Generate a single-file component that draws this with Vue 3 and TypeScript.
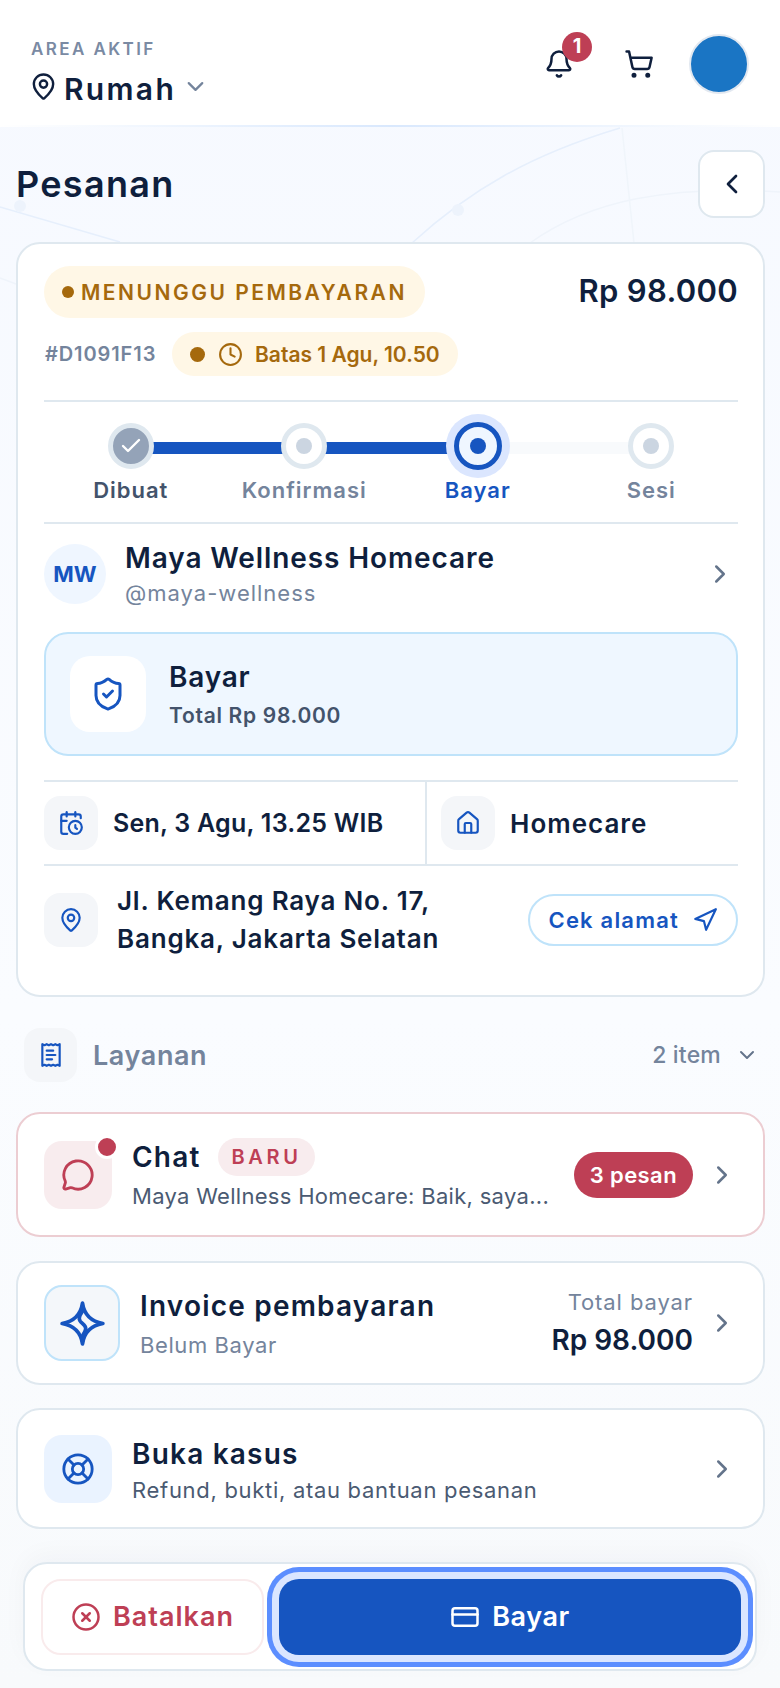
<template>
  <div class="page">
    <svg class="map-lines" viewBox="0 0 780 1100" fill="none" aria-hidden="true">
      <path d="M0 207 L120 242" stroke="#e6effc" stroke-width="1.5" />
      <path d="M412 243 C 470 190, 530 155, 620 128" stroke="#e6effc" stroke-width="1.5" />
      <path d="M530 243 C 590 200, 670 185, 780 192" stroke="#eff4fb" stroke-width="1.5" />
      <path d="M622 128 L 634 243" stroke="#f0f5fb" stroke-width="1.5" />
      <path d="M0 278 L 16 284" stroke="#eff4fb" stroke-width="1.5" />
      <circle cx="458" cy="210" r="6" fill="#edf3fc" />
      <circle cx="20" cy="206" r="6" fill="#edf3fc" />
    </svg>

    <header class="topbar">
      <div class="area">
        <span class="area-label">AREA AKTIF</span>
        <div class="area-name">
          <svg class="pin" viewBox="0 0 24 24" fill="none" stroke="currentColor" stroke-width="2" stroke-linecap="round" stroke-linejoin="round">
            <path d="M20 10c0 4.993-5.539 10.193-7.399 11.799a1 1 0 0 1-1.202 0C9.539 20.193 4 14.993 4 10a8 8 0 0 1 16 0" />
            <circle cx="12" cy="10" r="3" />
          </svg>
          <span>Rumah</span>
          <svg class="area-chevron" viewBox="0 0 24 24" fill="none" stroke="currentColor" stroke-width="2" stroke-linecap="round" stroke-linejoin="round">
            <path d="m6 9 6 6 6-6" />
          </svg>
        </div>
      </div>
      <div class="top-actions">
        <div class="bell">
          <svg viewBox="0 0 24 24" fill="none" stroke="currentColor" stroke-width="2" stroke-linecap="round" stroke-linejoin="round">
            <path d="M10.268 21a2 2 0 0 0 3.464 0" />
            <path d="M3.262 15.326A1 1 0 0 0 4 17h16a1 1 0 0 0 .74-1.673C19.41 13.956 18 12.499 18 8A6 6 0 0 0 6 8c0 4.499-1.411 5.956-2.738 7.326" />
          </svg>
          <span class="bell-badge">1</span>
        </div>
        <svg class="cart" viewBox="0 0 24 24" fill="none" stroke="currentColor" stroke-width="2" stroke-linecap="round" stroke-linejoin="round">
          <circle cx="8" cy="21" r="1" />
          <circle cx="19" cy="21" r="1" />
          <path d="M2.05 2.05h2l2.66 12.42a2 2 0 0 0 2 1.58h9.78a2 2 0 0 0 1.95-1.57l1.65-7.43H5.12" />
        </svg>
        <div class="avatar"></div>
      </div>
    </header>

    <main class="content">
      <div class="title-row">
        <h1>Pesanan</h1>
        <button type="button" class="back">
          <svg viewBox="0 0 24 24" fill="none" stroke="currentColor" stroke-width="2" stroke-linecap="round" stroke-linejoin="round">
            <path d="m15 18-6-6 6-6" />
          </svg>
        </button>
      </div>

      <section class="card order">
        <div class="order-top">
          <span class="status"><i class="dot"></i>MENUNGGU PEMBAYARAN</span>
          <strong class="price">Rp 98.000</strong>
        </div>
        <div class="order-meta">
          <span class="code">#D1091F13</span>
          <span class="deadline">
            <i class="dot big"></i>
            <svg viewBox="0 0 24 24" fill="none" stroke="currentColor" stroke-width="2" stroke-linecap="round" stroke-linejoin="round">
              <circle cx="12" cy="12" r="10" />
              <polyline points="12 6 12 12 16 14" />
            </svg>
            Batas 1 Agu, 10.50
          </span>
        </div>

        <div class="stepper">
          <div v-for="(step, index) in steps" :key="step.label" class="step" :class="step.state">
            <span v-if="index < steps.length - 1" class="bar" :class="{ on: step.barOn }"></span>
            <span class="node">
              <svg v-if="step.state === 'done'" viewBox="0 0 24 24" fill="none" stroke="#fff" stroke-width="2.4" stroke-linecap="round" stroke-linejoin="round">
                <path d="M20 6 9 17l-5-5" />
              </svg>
              <i v-else></i>
            </span>
            <span class="step-label">{{ step.label }}</span>
          </div>
        </div>

        <div class="provider">
          <span class="initials">MW</span>
          <div class="provider-text">
            <strong>Maya Wellness Homecare</strong>
            <span>@maya-wellness</span>
          </div>
          <svg class="chev" viewBox="0 0 24 24" fill="none" stroke="currentColor" stroke-width="2" stroke-linecap="round" stroke-linejoin="round">
            <path d="m9 18 6-6-6-6" />
          </svg>
        </div>

        <div class="pay-box">
          <span class="pay-icon">
            <svg viewBox="0 0 24 24" fill="none" stroke="currentColor" stroke-width="2" stroke-linecap="round" stroke-linejoin="round">
              <path d="M20 13c0 5-3.5 7.5-7.66 8.95a1 1 0 0 1-.67-.01C7.5 20.5 4 18 4 13V6a1 1 0 0 1 1-1c2 0 4.5-1.2 6.24-2.72a1.17 1.17 0 0 1 1.52 0C14.51 3.81 17 5 19 5a1 1 0 0 1 1 1z" />
              <path d="m9 12 2 2 4-4" />
            </svg>
          </span>
          <div>
            <strong>Bayar</strong>
            <span>Total Rp 98.000</span>
          </div>
        </div>

        <div class="facts">
          <div class="fact left">
            <span class="fact-icon">
              <svg viewBox="0 0 24 24" fill="none" stroke="currentColor" stroke-width="2" stroke-linecap="round" stroke-linejoin="round">
                <path d="M21 7.5V6a2 2 0 0 0-2-2H5a2 2 0 0 0-2 2v14a2 2 0 0 0 2 2h3.5" />
                <path d="M16 2v4" />
                <path d="M8 2v4" />
                <path d="M3 10h5" />
                <path d="M17.5 17.5 16 16.3V14" />
                <circle cx="16" cy="16" r="6" />
              </svg>
            </span>
            <span>Sen, 3 Agu, 13.25 WIB</span>
          </div>
          <div class="fact right">
            <span class="fact-icon">
              <svg viewBox="0 0 24 24" fill="none" stroke="currentColor" stroke-width="2" stroke-linecap="round" stroke-linejoin="round">
                <path d="M15 21v-8a1 1 0 0 0-1-1h-4a1 1 0 0 0-1 1v8" />
                <path d="M3 10a2 2 0 0 1 .709-1.528l7-5.999a2 2 0 0 1 2.582 0l7 5.999A2 2 0 0 1 21 10v9a2 2 0 0 1-2 2H5a2 2 0 0 1-2-2z" />
              </svg>
            </span>
            <span>Homecare</span>
          </div>
        </div>

        <div class="address">
          <span class="fact-icon">
            <svg viewBox="0 0 24 24" fill="none" stroke="currentColor" stroke-width="2" stroke-linecap="round" stroke-linejoin="round">
              <path d="M20 10c0 4.993-5.539 10.193-7.399 11.799a1 1 0 0 1-1.202 0C9.539 20.193 4 14.993 4 10a8 8 0 0 1 16 0" />
              <circle cx="12" cy="10" r="3" />
            </svg>
          </span>
          <p>Jl. Kemang Raya No. 17,<br />Bangka, Jakarta Selatan</p>
          <button type="button" class="check">
            Cek alamat
            <svg viewBox="0 0 24 24" fill="none" stroke="currentColor" stroke-width="2" stroke-linecap="round" stroke-linejoin="round">
              <polygon points="3 11 22 2 13 21 11 13 3 11" />
            </svg>
          </button>
        </div>
      </section>

      <div class="section-row">
        <span class="fact-icon small">
          <svg viewBox="0 0 24 24" fill="none" stroke="currentColor" stroke-width="2" stroke-linecap="round" stroke-linejoin="round">
            <path d="M4 2v20l2-1 2 1 2-1 2 1 2-1 2 1 2-1 2 1V2l-2 1-2-1-2 1-2-1-2 1-2-1-2 1Z" />
            <path d="M14 8H8" />
            <path d="M16 12H8" />
            <path d="M13 16H8" />
          </svg>
        </span>
        <span class="section-title">Layanan</span>
        <span class="section-count">2 item</span>
        <svg class="section-chevron" viewBox="0 0 24 24" fill="none" stroke="currentColor" stroke-width="2" stroke-linecap="round" stroke-linejoin="round">
          <path d="m6 9 6 6 6-6" />
        </svg>
      </div>

      <section class="card row chat">
        <span class="row-icon rose">
          <svg viewBox="0 0 24 24" fill="none" stroke="currentColor" stroke-width="2" stroke-linecap="round" stroke-linejoin="round">
            <path d="M2.992 16.342a2 2 0 0 1 .094 1.167l-1.065 3.29a1 1 0 0 0 1.236 1.168l3.413-.998a2 2 0 0 1 1.099.092 10 10 0 1 0-4.777-4.719" />
          </svg>
          <i class="unread"></i>
        </span>
        <div class="row-text">
          <div class="row-title">
            <strong>Chat</strong>
            <span class="new-tag">BARU</span>
          </div>
          <span class="row-sub">Maya Wellness Homecare: Baik, saya...</span>
        </div>
        <span class="count-pill">3 pesan</span>
        <svg class="chev" viewBox="0 0 24 24" fill="none" stroke="currentColor" stroke-width="2" stroke-linecap="round" stroke-linejoin="round">
          <path d="m9 18 6-6-6-6" />
        </svg>
      </section>

      <section class="card row invoice">
        <span class="row-icon outlined">
          <svg viewBox="0 0 24 24" fill="none" stroke="currentColor" stroke-width="1.8" stroke-linecap="round" stroke-linejoin="round">
            <path d="M12 2C12.8 7.5 16 11 22 12C16 13 12.8 16.5 12 22C11.2 16.5 8 13 2 12C8 11 11.2 7.5 12 2Z" />
            <path d="M12 6C10.2 8.6 9.6 10.2 12 12C14.4 13.8 13.8 15.4 12 18" />
          </svg>
        </span>
        <div class="row-text">
          <div class="row-title"><strong>Invoice pembayaran</strong></div>
          <span class="row-sub muted">Belum Bayar</span>
        </div>
        <div class="total">
          <span>Total bayar</span>
          <strong>Rp 98.000</strong>
        </div>
        <svg class="chev" viewBox="0 0 24 24" fill="none" stroke="currentColor" stroke-width="2" stroke-linecap="round" stroke-linejoin="round">
          <path d="m9 18 6-6-6-6" />
        </svg>
      </section>

      <section class="card row case">
        <span class="row-icon sky">
          <svg viewBox="0 0 24 24" fill="none" stroke="currentColor" stroke-width="2" stroke-linecap="round" stroke-linejoin="round">
            <circle cx="12" cy="12" r="10" />
            <path d="m4.93 4.93 4.24 4.24" />
            <path d="m14.83 9.17 4.24-4.24" />
            <path d="m14.83 14.83 4.24 4.24" />
            <path d="m9.17 14.83-4.24 4.24" />
            <circle cx="12" cy="12" r="4" />
          </svg>
        </span>
        <div class="row-text">
          <div class="row-title"><strong>Buka kasus</strong></div>
          <span class="row-sub wide">Refund, bukti, atau bantuan pesanan</span>
        </div>
        <svg class="chev" viewBox="0 0 24 24" fill="none" stroke="currentColor" stroke-width="2" stroke-linecap="round" stroke-linejoin="round">
          <path d="m9 18 6-6-6-6" />
        </svg>
      </section>

      <div class="action-bar">
        <button type="button" class="cancel">
          <svg viewBox="0 0 24 24" fill="none" stroke="currentColor" stroke-width="2" stroke-linecap="round" stroke-linejoin="round">
            <circle cx="12" cy="12" r="10" />
            <path d="m15 9-6 6" />
            <path d="m9 9 6 6" />
          </svg>
          Batalkan
        </button>
        <button type="button" class="pay">
          <svg viewBox="0 0 24 24" fill="none" stroke="currentColor" stroke-width="2" stroke-linecap="round" stroke-linejoin="round">
            <rect width="20" height="14" x="2" y="5" rx="2" />
            <line x1="2" x2="22" y1="10" y2="10" />
          </svg>
          Bayar
        </button>
      </div>
    </main>
  </div>
</template>

<script setup lang="ts">
interface Step {
  label: string
  state: 'done' | 'todo' | 'active'
  barOn: boolean
}

const steps: Step[] = [
  { label: 'Dibuat', state: 'done', barOn: true },
  { label: 'Konfirmasi', state: 'todo', barOn: true },
  { label: 'Bayar', state: 'active', barOn: false },
  { label: 'Sesi', state: 'todo', barOn: false },
]
</script>

<style>
body {
  background: #f8fafc;
}
</style>

<style scoped>
.page {
  position: relative;
  width: 780px;
  height: 1688px;
  overflow: hidden;
  background: linear-gradient(180deg, #f6f9ff 0%, #fafcff 60%, #f8fafc 100%);
  font-family: Inter, 'Noto Sans', sans-serif;
  color: #0f1f3d;
}

.map-lines {
  position: absolute;
  top: 0;
  left: 0;
  width: 780px;
  height: 1100px;
}

.topbar {
  position: relative;
  display: flex;
  justify-content: space-between;
  align-items: flex-start;
  height: 127px;
  padding: 0 31px;
  box-sizing: border-box;
  background: #fff;
  border-bottom: 2px solid;
  border-image: linear-gradient(90deg, #fff 0%, #d9e8fd 50%, #fff 100%) 1;
}

.area {
  display: flex;
  flex-direction: column;
  padding-top: 39px;
}

.area-label {
  font-size: 17px;
  line-height: 20px;
  font-weight: 600;
  letter-spacing: 2.4px;
  color: #7a8aa3;
}

.area-name {
  display: flex;
  align-items: center;
  margin-top: 10px;
  font-size: 30px;
  line-height: 40px;
  font-weight: 600;
  letter-spacing: 2.3px;
}

.pin {
  width: 29px;
  height: 29px;
  margin: -6px 6px 0 -2px;
}

.area-chevron {
  width: 27px;
  height: 27px;
  margin: -6px 0 0 6px;
  color: #74849c;
}

.top-actions {
  display: flex;
  align-items: center;
  padding-top: 34px;
}

.bell {
  position: relative;
  width: 30px;
  height: 30px;
}

.bell svg {
  display: block;
  width: 30px;
  height: 30px;
}

.bell-badge {
  position: absolute;
  top: -17px;
  left: 18px;
  width: 30px;
  height: 30px;
  border-radius: 50%;
  background: #be3f55;
  color: #fff;
  font-size: 20px;
  line-height: 28px;
  font-weight: 700;
  text-align: center;
}

.cart {
  width: 30px;
  height: 30px;
  margin-left: 50px;
}

.avatar {
  width: 60px;
  height: 60px;
  margin-left: 35px;
  box-sizing: border-box;
  border-radius: 50%;
  border: 2px solid #e2e8f0;
  background: #1a75c4;
}

.content {
  position: relative;
  display: flex;
  flex-direction: column;
  padding: 0 15px 0 16px;
}

.title-row {
  display: flex;
  justify-content: space-between;
  align-items: center;
  height: 68px;
  margin-top: 23px;
}

h1 {
  margin: -1px 0 0;
  font-size: 36px;
  font-weight: 600;
  letter-spacing: 1.3px;
  line-height: 42px;
}

.back {
  display: flex;
  align-items: center;
  justify-content: center;
  width: 67px;
  height: 68px;
  padding: 0;
  box-sizing: border-box;
  border-radius: 16px;
  border: 2px solid #dfe8ef;
  background: #fff;
  color: #0f1f3d;
}

.back svg {
  width: 32px;
  height: 32px;
}

.card {
  box-sizing: border-box;
  border-radius: 24px;
  border: 2px solid #dfe8ef;
  background: #fff;
}

.order {
  height: 755px;
  margin-top: 24px;
  padding: 22px 25px 0 26px;
}

.order-top {
  display: flex;
  justify-content: space-between;
  align-items: flex-start;
}

.status {
  display: inline-flex;
  align-items: center;
  height: 52px;
  padding: 0 18px;
  border-radius: 26px;
  background: #fff7e6;
  color: #a5690d;
  font-size: 21px;
  font-weight: 600;
  letter-spacing: 2.5px;
  white-space: nowrap;
}

.dot {
  display: inline-block;
  width: 12px;
  height: 12px;
  margin-right: 7px;
  border-radius: 50%;
  background: #a5690d;
}

.dot.big {
  width: 15px;
  height: 15px;
  margin-right: 13px;
}

.price {
  margin: 2px 0 0;
  font-size: 31px;
  line-height: 46px;
  font-weight: 600;
  letter-spacing: 0.3px;
}

.order-meta {
  display: flex;
  align-items: center;
  gap: 15px;
  margin-top: 14px;
}

.code {
  width: 113px;
  padding-left: 1px;
  box-sizing: border-box;
  font-size: 20px;
  font-weight: 600;
  letter-spacing: 0.9px;
  color: #74849c;
  white-space: nowrap;
}

.deadline {
  display: inline-flex;
  align-items: center;
  height: 44px;
  padding: 0 18px 0 18px;
  border-radius: 22px;
  background: #fff7e6;
  color: #a5690d;
  font-size: 21px;
  font-weight: 600;
  white-space: nowrap;
}

.deadline svg {
  width: 25px;
  height: 25px;
  margin-right: 12px;
}

.stepper {
  display: grid;
  grid-template-columns: repeat(4, 1fr);
  height: 124px;
  margin-top: 24px;
  padding-top: 13px;
  box-sizing: border-box;
  border-top: 2px solid #dfe8ef;
  border-bottom: 2px solid #dfe8ef;
}

.step {
  position: relative;
  display: flex;
  flex-direction: column;
  align-items: center;
}

.bar {
  position: absolute;
  top: 27px;
  left: 50%;
  width: 100%;
  height: 12px;
  background: #f8fafc;
}

.bar.on {
  background: #1655c0;
}

.node {
  position: relative;
  display: flex;
  align-items: center;
  justify-content: center;
  box-sizing: border-box;
  width: 46px;
  height: 46px;
  margin-top: 8px;
  border-radius: 50%;
  border: 5px solid #dfe8ef;
  background: #fff;
}

.node i {
  width: 16px;
  height: 16px;
  border-radius: 50%;
  background: #cbd5e1;
}

.done .node {
  background: #94a3b8;
}

.done .node svg {
  width: 24px;
  height: 24px;
}

.active .node {
  width: 48px;
  height: 48px;
  margin-top: 7px;
  border: 5px solid #1655c0;
  background: #eff6ff;
  box-shadow: 0 0 0 8px #dbe6fe;
}

.active .node i {
  background: #1655c0;
}

.step-label {
  margin-top: 6px;
  font-size: 22px;
  line-height: 30px;
  font-weight: 600;
  letter-spacing: 1px;
  color: #74849c;
}

.active .step-label {
  margin-top: 5px;
  color: #1655c0;
}

.done .step-label {
  color: #43536b;
}

.provider {
  display: flex;
  align-items: center;
  height: 60px;
  margin-top: 20px;
}

.initials {
  display: flex;
  align-items: center;
  justify-content: center;
  flex: none;
  width: 62px;
  height: 60px;
  border-radius: 50%;
  background: #eff6ff;
  color: #1655c0;
  font-size: 22px;
  font-weight: 700;
}

.provider-text {
  flex: 1;
  display: flex;
  flex-direction: column;
  margin-left: 19px;
  padding-top: 1px;
}

.provider-text strong {
  font-size: 28px;
  line-height: 36px;
  font-weight: 600;
  letter-spacing: 0.9px;
}

.provider-text span {
  font-size: 22px;
  line-height: 34px;
  letter-spacing: 1px;
  color: #74849c;
}

.chev {
  flex: none;
  width: 30px;
  height: 30px;
  color: #64748b;
}

.provider .chev {
  margin-right: 3px;
}

.pay-box {
  display: flex;
  align-items: center;
  gap: 23px;
  height: 124px;
  margin-top: 28px;
  padding-left: 24px;
  box-sizing: border-box;
  border-radius: 24px;
  border: 2px solid #bfe3fa;
  background: #eff7ff;
}

.pay-icon {
  display: flex;
  align-items: center;
  justify-content: center;
  width: 76px;
  height: 76px;
  border-radius: 20px;
  background: #fff;
  color: #1655c0;
}

.pay-icon svg {
  width: 36px;
  height: 36px;
}

.pay-box div {
  display: flex;
  flex-direction: column;
}

.pay-box strong {
  font-size: 28px;
  line-height: 38px;
  font-weight: 600;
  letter-spacing: 0.8px;
}

.pay-box span:not(.pay-icon) {
  margin-top: 5px;
  font-size: 21px;
  line-height: 30px;
  font-weight: 600;
  letter-spacing: 0.7px;
  color: #43536b;
}

.facts {
  display: grid;
  grid-template-columns: 381px 1fr;
  height: 86px;
  margin-top: 24px;
  box-sizing: border-box;
  border-top: 2px solid #dfe8ef;
  border-bottom: 2px solid #dfe8ef;
}

.fact {
  display: flex;
  align-items: center;
  gap: 15px;
  font-size: 25px;
  font-weight: 600;
  letter-spacing: 0.25px;
  white-space: nowrap;
}

.fact.right {
  padding-left: 14px;
  border-left: 2px solid #dfe8ef;
  font-size: 26px;
  letter-spacing: 1px;
}

.fact-icon {
  display: flex;
  align-items: center;
  justify-content: center;
  flex: none;
  width: 54px;
  height: 54px;
  border-radius: 16px;
  background: #f4f6f9;
  color: #1655c0;
}

.fact-icon svg {
  width: 26px;
  height: 26px;
}

.address {
  display: flex;
  align-items: center;
  margin-top: 16px;
}

.address p {
  flex: 1;
  margin: 0 0 0 19px;
  font-size: 26px;
  line-height: 38px;
  font-weight: 600;
  letter-spacing: 0.8px;
  white-space: nowrap;
}

.check {
  display: flex;
  align-items: center;
  gap: 13px;
  height: 52px;
  padding: 0 18px;
  box-sizing: border-box;
  border-radius: 26px;
  border: 2px solid #bfe3fa;
  background: #fff;
  color: #1655c0;
  font-family: inherit;
  font-size: 22px;
  font-weight: 600;
  letter-spacing: 1.2px;
  white-space: nowrap;
}

.check svg {
  width: 26px;
  height: 26px;
}

.section-row {
  display: flex;
  align-items: center;
  height: 54px;
  margin: 31px 0 30px 8px;
}

.fact-icon.small {
  width: 53px;
}

.section-title {
  flex: 1;
  margin-left: 16px;
  font-size: 27px;
  font-weight: 600;
  letter-spacing: 0.6px;
  color: #74849c;
}

.section-count {
  font-size: 23px;
  font-weight: 500;
  letter-spacing: 0.2px;
  color: #74849c;
}

.section-chevron {
  width: 24px;
  height: 24px;
  margin: 0 6px 0 14px;
  color: #64748b;
}

.row {
  display: flex;
  align-items: center;
  padding: 0 24px 0 26px;
}

.chat {
  height: 125px;
  border-color: #eccdd2;
}

.invoice {
  height: 124px;
  margin-top: 24px;
}

.case {
  height: 121px;
  margin-top: 23px;
}

.row-icon {
  position: relative;
  display: flex;
  align-items: center;
  justify-content: center;
  flex: none;
  box-sizing: border-box;
  width: 68px;
  height: 68px;
  border-radius: 18px;
}

.row-icon svg {
  width: 34px;
  height: 34px;
}

.rose {
  background: #f8ecee;
  color: #be3f55;
}

.outlined {
  width: 76px;
  height: 76px;
  border: 2px solid #bfe3fa;
  background: #f4f7fa;
  color: #1655c0;
}

.outlined svg {
  width: 49px;
  height: 49px;
}

.sky {
  background: #eaf3ff;
  color: #1655c0;
}

.unread {
  position: absolute;
  top: -6px;
  right: -7px;
  width: 18px;
  height: 18px;
  border-radius: 50%;
  border: 3px solid #fff;
  background: #be3f55;
}

.row-text {
  flex: 1;
  min-width: 0;
  margin-left: 20px;
  display: flex;
  flex-direction: column;
  gap: 5px;
}

.case .row-text {
  gap: 2px;
  padding-top: 3px;
}

.row-title {
  display: flex;
  align-items: center;
  gap: 17px;
  height: 38px;
}

.row-title strong {
  font-size: 28px;
  font-weight: 600;
  letter-spacing: 1.2px;
}

.new-tag {
  display: flex;
  align-items: center;
  height: 38px;
  padding: 0 14px;
  border-radius: 19px;
  background: #f8ecee;
  color: #be3f55;
  font-size: 20px;
  font-weight: 600;
  letter-spacing: 3.6px;
}

.row-sub {
  font-size: 22px;
  line-height: 30px;
  letter-spacing: 0.3px;
  color: #4a5a72;
  white-space: nowrap;
}

.row-sub.muted {
  letter-spacing: 0.6px;
  color: #74849c;
}

.row-sub.wide {
  letter-spacing: 0.7px;
}

.count-pill {
  display: flex;
  align-items: center;
  height: 46px;
  padding: 0 16px;
  border-radius: 23px;
  background: #be3f55;
  color: #fff;
  font-size: 22px;
  font-weight: 600;
  letter-spacing: 0.4px;
  white-space: nowrap;
}

.total {
  display: flex;
  flex-direction: column;
  align-items: flex-end;
  gap: 2px;
}

.total span {
  font-size: 22px;
  line-height: 32px;
  letter-spacing: 0.9px;
  color: #74849c;
}

.total strong {
  font-size: 28px;
  line-height: 40px;
  font-weight: 600;
}

.row .chev {
  margin-left: 14px;
  margin-right: 2px;
}

.action-bar {
  position: absolute;
  top: 1435px;
  left: 23px;
  display: flex;
  align-items: center;
  gap: 15px;
  width: 734px;
  height: 109px;
  padding: 0 14px 0 16px;
  box-sizing: border-box;
  border-radius: 24px;
  border: 2px solid #dfe8ef;
  background: #fff;
  box-shadow: 0 -8px 24px rgba(15, 31, 61, 0.03);
}

.cancel,
.pay {
  display: flex;
  align-items: center;
  justify-content: center;
  height: 76px;
  box-sizing: border-box;
  border-radius: 20px;
  font-family: inherit;
  font-size: 27px;
  font-weight: 600;
  padding: 0;
}

.cancel {
  flex: none;
  width: 223px;
  gap: 12px;
  border: 2px solid #f9ebec;
  background: #fff;
  color: #be3f55;
  letter-spacing: 1px;
}

.pay {
  flex: 1;
  gap: 12px;
  border: none;
  background: #1655c0;
  color: #fff;
  letter-spacing: 0.6px;
  box-shadow: 0 0 0 7px #dbe6ff, 0 0 0 12px #5c8eff;
}

.cancel svg,
.pay svg {
  width: 30px;
  height: 30px;
}
</style>
